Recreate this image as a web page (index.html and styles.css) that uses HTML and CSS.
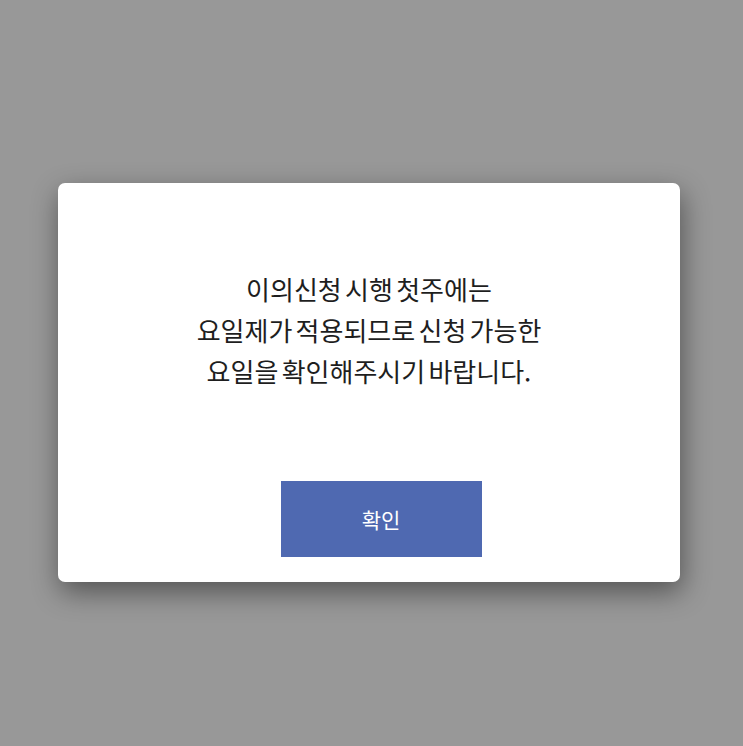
FILE: index.html
```html
<!DOCTYPE html>
<html lang="ko">
<head>
<meta charset="utf-8">
<link rel="stylesheet" href="styles.css">
</head>
<body>
<div class="page">
  <div class="dialog">
    <p class="message">이의신청 시행 첫주에는<br>요일제가 적용되므로 신청 가능한<br>요일을 확인해주시기 바랍니다.</p>
    <button class="confirm">확인</button>
  </div>
</div>
</body>
</html>
```
FILE: styles.css
```css
html, body {
  margin: 0;
  padding: 0;
  background: #989898;
}
.page {
  width: 743px;
  height: 746px;
  padding-top: 183px;
  padding-left: 58px;
  box-sizing: border-box;
}
.dialog {
  width: 622px;
  height: 399px;
  box-sizing: border-box;
  background: #ffffff;
  border-radius: 7px;
  box-shadow: 2px 10px 28px rgba(0, 0, 0, 0.45);
  padding-top: 85px;
  display: flex;
  flex-direction: column;
  align-items: center;
}
.message {
  margin: 0;
  font-family: "Noto Sans CJK KR", "Noto Sans", sans-serif;
  font-size: 26px;
  line-height: 41px;
  letter-spacing: 0;
  word-spacing: -4px;
  color: #1e1e1e;
  text-align: center;
}
.confirm {
  margin-top: 90px;
  margin-left: 24px;
  width: 201px;
  height: 76px;
  border: none;
  border-radius: 0;
  background: #4f69b1;
  color: #ffffff;
  font-family: "Noto Sans CJK KR", "Noto Sans", sans-serif;
  font-size: 21px;
  padding: 0;
}
```
